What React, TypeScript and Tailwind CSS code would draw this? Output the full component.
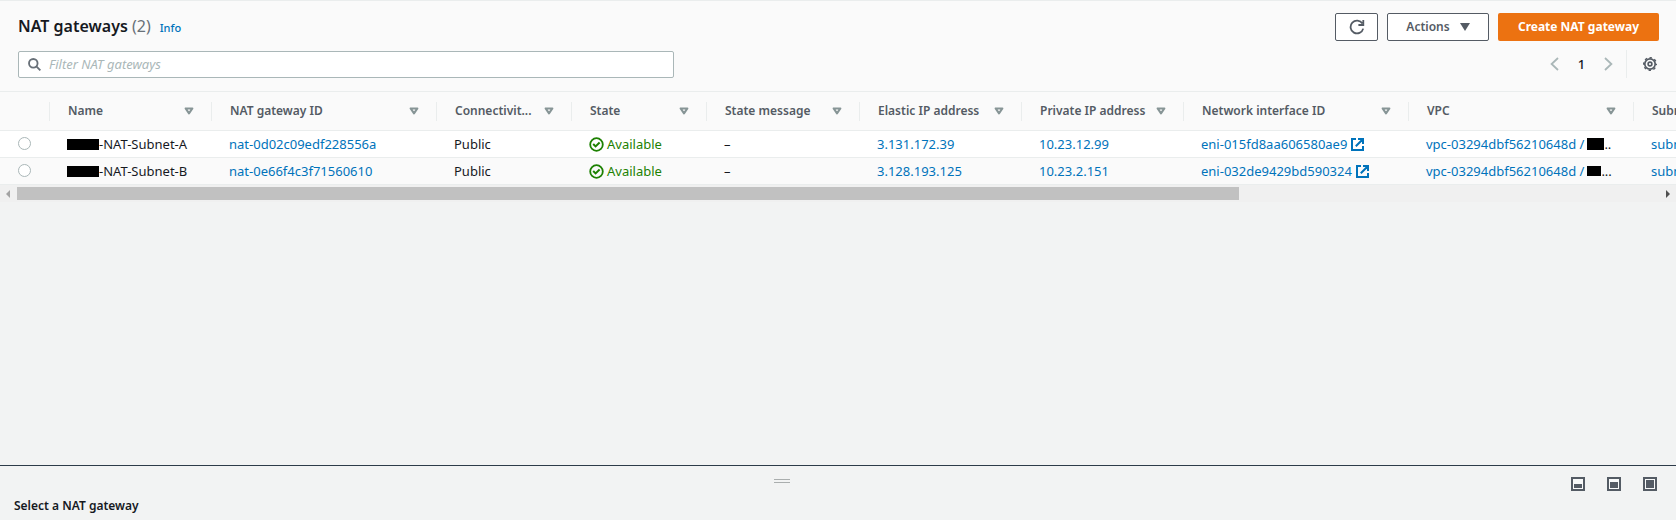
import type { ReactNode } from "react";

type Gateway = {
  name: string;
  id: string;
  connectivity: string;
  elasticIp: string;
  privateIp: string;
  eni: string;
  vpc: string;
  vpcMask: string;
  vpcTail: string;
  subnet: string;
};

const gateways: Gateway[] = [
  {
    name: "-NAT-Subnet-A",
    id: "nat-0d02c09edf228556a",
    connectivity: "Public",
    elasticIp: "3.131.172.39",
    privateIp: "10.23.12.99",
    eni: "eni-015fd8aa606580ae9",
    vpc: "vpc-03294dbf56210648d /",
    vpcMask: "h-3 w-[17px]",
    vpcTail: "..",
    subnet: "subnet-0",
  },
  {
    name: "-NAT-Subnet-B",
    id: "nat-0e66f4c3f71560610",
    connectivity: "Public",
    elasticIp: "3.128.193.125",
    privateIp: "10.23.2.151",
    eni: "eni-032de9429bd590324",
    vpc: "vpc-03294dbf56210648d /",
    vpcMask: "h-[10px] w-[14px]",
    vpcTail: "...",
    subnet: "subnet-0",
  },
];

const columns = [
  { label: "Name", width: "w-[162px]" },
  { label: "NAT gateway ID", width: "w-[225px]" },
  { label: "Connectivit...", width: "w-[135px]" },
  { label: "State", width: "w-[135px]" },
  { label: "State message", width: "w-[153px]" },
  { label: "Elastic IP address", width: "w-[162px]" },
  { label: "Private IP address", width: "w-[162px]" },
  { label: "Network interface ID", width: "w-[225px]" },
  { label: "VPC", width: "w-[225px]" },
  { label: "Subnet", width: "w-[225px]" },
];

function SortIcon() {
  return (
    <svg className="h-2 w-[10px] shrink-0" viewBox="0 0 10 8" fill="none" stroke="#879596" strokeWidth="2" strokeLinejoin="round">
      <path d="M1.6 1.4h6.8L5 6.4z" />
    </svg>
  );
}

function ExternalIcon() {
  return (
    <svg className="h-[13px] w-[13px] shrink-0" viewBox="0 0 13 13" fill="none" stroke="#0073bb" strokeWidth="2">
      <path d="M5 1H1v11h11V8M7 1h5v5M11.8 1.2L4.8 8.2" />
    </svg>
  );
}

function CheckIcon() {
  return (
    <svg className="h-[15px] w-[15px] shrink-0" viewBox="0 0 15 15" fill="none" stroke="#1d8102" strokeWidth="2">
      <circle cx="7.5" cy="7.5" r="6.3" strokeWidth="1.8" />
      <path d="M4.2 7l2.4 2.4 4-3.9" />
    </svg>
  );
}

function CellLink({ children }: { children: ReactNode }) {
  return (
    <a href="#" className="text-[#0073bb]">
      {children}
    </a>
  );
}

function PanelButton({ label, children }: { label: string; children: ReactNode }) {
  return (
    <button aria-label={label} type="button">
      <svg className="block h-[14px] w-[14px]" viewBox="0 0 14 14" fill="#545b64">
        <rect x="1" y="1" width="12" height="12" fill="#f8f9f9" stroke="#545b64" strokeWidth="2" />
        {children}
      </svg>
    </button>
  );
}

export default function App() {
  return (
    <div className="flex h-screen flex-col overflow-hidden bg-[#f2f3f3] font-['Noto_Sans',sans-serif] text-[13px] leading-5 text-[#16191f]">
      <main className="flex-1">
        <header className="flex flex-col gap-[9px] border-y border-[#eaeded] bg-[#fafafa] pt-3 pr-[17px] pb-[13px] pl-[18px]">
          <div className="flex h-7 items-center justify-between">
            <div className="flex items-baseline gap-[9px]">
              <h1 className="text-base leading-5 font-semibold">
                NAT gateways <span className="font-normal text-[#687078]">(2)</span>
              </h1>
              <a href="#" className="text-[11px] font-medium text-[#0073bb]">
                Info
              </a>
            </div>
            <div className="flex gap-[9px] font-semibold text-[#545b64]">
              <button
                type="button"
                aria-label="Refresh"
                className="flex h-7 w-[43px] items-center justify-center rounded-xs border border-[#545b64] bg-white"
              >
                <svg className="h-4 w-4" viewBox="0 0 16 16" fill="none" stroke="#545b64" strokeWidth="1.8">
                  <path d="M14.2 9.6A6.4 6.4 0 1 1 13.4 4.6M14.3 1v5H9.4" />
                </svg>
              </button>
              <button
                type="button"
                className="flex h-7 w-[102px] items-center justify-center gap-[10px] rounded-xs border border-[#545b64] bg-white text-xs"
              >
                Actions
                <svg className="h-2 w-[10px]" viewBox="0 0 10 8" fill="#545b64">
                  <path d="M0 0h10L5 8z" />
                </svg>
              </button>
              <button
                type="button"
                className="flex h-7 w-[161px] items-center justify-center rounded-xs bg-[#ec7211] text-xs font-bold whitespace-nowrap text-white"
              >
                Create NAT gateway
              </button>
            </div>
          </div>
          <div className="flex items-end justify-between">
            <label className="flex h-[27px] w-2/5 items-center gap-2 rounded-xs border border-[#aab7b8] bg-white px-[9px]">
              <svg className="h-[13px] w-[13px] shrink-0" viewBox="0 0 14 14" fill="none" stroke="#687078" strokeWidth="2">
                <circle cx="5.7" cy="5.7" r="4.6" />
                <path d="M9 9l4.3 4.3" />
              </svg>
              <input
                type="search"
                aria-label="Filter NAT gateways"
                placeholder="Filter NAT gateways"
                className="w-full bg-transparent pb-px outline-none placeholder:text-[#aab7b8] placeholder:italic"
              />
            </label>
            <div className="flex items-center">
              <button type="button" aria-label="Previous page">
                <svg className="block h-[14px] w-[9px]" viewBox="0 0 9 14" fill="none" stroke="#aab7b8" strokeWidth="1.8">
                  <path d="M8 1L1.6 7 8 13" />
                </svg>
              </button>
              <button type="button" className="w-[45px] text-center font-medium">
                1
              </button>
              <button type="button" aria-label="Next page">
                <svg className="block h-[14px] w-[9px]" viewBox="0 0 9 14" fill="none" stroke="#aab7b8" strokeWidth="1.8">
                  <path d="M1 1l6.4 6L1 13" />
                </svg>
              </button>
              <div className="ml-[13px] flex h-7 items-center border-l border-[#eaeded] pr-[2px] pl-4">
                <button type="button" aria-label="Preferences">
                  <svg className="block h-[14px] w-[14px]" viewBox="0 0 14 14" fill="none" stroke="#545b64">
                    <circle cx="7" cy="7" r="5.2" strokeWidth="1.7" />
                    <circle cx="7" cy="7" r="6.4" strokeWidth="1.2" strokeDasharray="2.5 2.527" strokeDashoffset="1.25" />
                    <circle cx="7" cy="7" r="1.9" strokeWidth="1.6" />
                  </svg>
                </button>
              </div>
            </div>
          </div>
        </header>

        <div className="overflow-hidden">
          <table className="w-[1859px] min-w-full table-fixed border-separate border-spacing-0 whitespace-nowrap">
            <thead className="bg-[#fafafa] text-xs text-[#545b64]">
              <tr>
                <th className="h-[39px] w-[50px] border-b border-[#eaeded] p-0">
                  <div className="h-[19px] border-r border-[#eaeded]" />
                </th>
                {columns.map((column) => (
                  <th key={column.label} className={`${column.width} border-b border-[#eaeded] p-0 text-left font-semibold`}>
                    <div className="flex h-[19px] items-center justify-between border-r border-[#eaeded] pr-[17px] pl-[18px]">
                      <span>{column.label}</span>
                      <SortIcon />
                    </div>
                  </th>
                ))}
              </tr>
            </thead>
            <tbody className="[&_td]:h-[27px] [&_td]:border-b [&_td]:border-[#eaeded] [&_td]:py-0 [&_td]:pr-3 [&_td]:pl-[17px]">
              {gateways.map((gateway) => (
                <tr key={gateway.id} className="odd:bg-white even:bg-[#fafafa]">
                  <td className="align-top">
                    <input
                      type="radio"
                      name="gateway"
                      aria-label={gateway.id}
                      className="mt-[6px] ml-px block h-[13px] w-[13px] appearance-none rounded-full border border-[#aab7b8] bg-white"
                    />
                  </td>
                  <td>
                    <span className="flex items-center">
                      <span className="h-[11px] w-8 shrink-0 bg-black" />
                      {gateway.name}
                    </span>
                  </td>
                  <td>
                    <CellLink>{gateway.id}</CellLink>
                  </td>
                  <td>{gateway.connectivity}</td>
                  <td>
                    <span className="flex items-center gap-[3px] text-[#1d8102]">
                      <CheckIcon />
                      Available
                    </span>
                  </td>
                  <td>–</td>
                  <td>
                    <CellLink>{gateway.elasticIp}</CellLink>
                  </td>
                  <td>
                    <CellLink>{gateway.privateIp}</CellLink>
                  </td>
                  <td>
                    <a href="#" className="flex items-center gap-1 text-[#0073bb]">
                      {gateway.eni}
                      <ExternalIcon />
                    </a>
                  </td>
                  <td>
                    <span className="flex items-center">
                      <CellLink>{gateway.vpc}</CellLink>
                      <span className={`${gateway.vpcMask} ml-[3px] shrink-0 bg-black`} />
                      {gateway.vpcTail}
                    </span>
                  </td>
                  <td>
                    <CellLink>{gateway.subnet}</CellLink>
                  </td>
                </tr>
              ))}
            </tbody>
          </table>
        </div>

        <div className="flex h-[17px] items-center gap-[6px] bg-[#f0f0f0] px-[5px]">
          <svg className="h-2 w-[6px] shrink-0" viewBox="0 0 6 8" fill="#a3a3a3">
            <path d="M5 0v8L1 4z" />
          </svg>
          <div className="flex-1">
            <div className="h-[13px] w-[74.4%] bg-[#c1c1c1]" />
          </div>
          <svg className="h-2 w-[6px] shrink-0" viewBox="0 0 6 8" fill="#505050">
            <path d="M1 0v8l4-4z" />
          </svg>
        </div>
      </main>

      <section className="h-[55px] border-t border-[#2d3b49] px-[14px]">
        <div className="grid h-[30px] grid-cols-[1fr_auto_1fr] items-end">
          <span />
          <div className="mb-[13px] flex h-1 w-4 -translate-x-14 flex-col justify-between" role="separator">
            <div className="h-px bg-[#aaaeae]" />
            <div className="h-px bg-[#aaaeae]" />
          </div>
          <div className="flex justify-end gap-[22px] pr-[5px] pb-[5px]">
            <PanelButton label="Small panel">
              <rect x="3" y="7" width="8" height="4" />
            </PanelButton>
            <PanelButton label="Medium panel">
              <rect x="3" y="5" width="8" height="6" />
            </PanelButton>
            <PanelButton label="Large panel">
              <rect x="3" y="3" width="8" height="8" />
            </PanelButton>
          </div>
        </div>
        <h2 className="text-xs leading-5 font-semibold">Select a NAT gateway</h2>
      </section>
    </div>
  );
}
